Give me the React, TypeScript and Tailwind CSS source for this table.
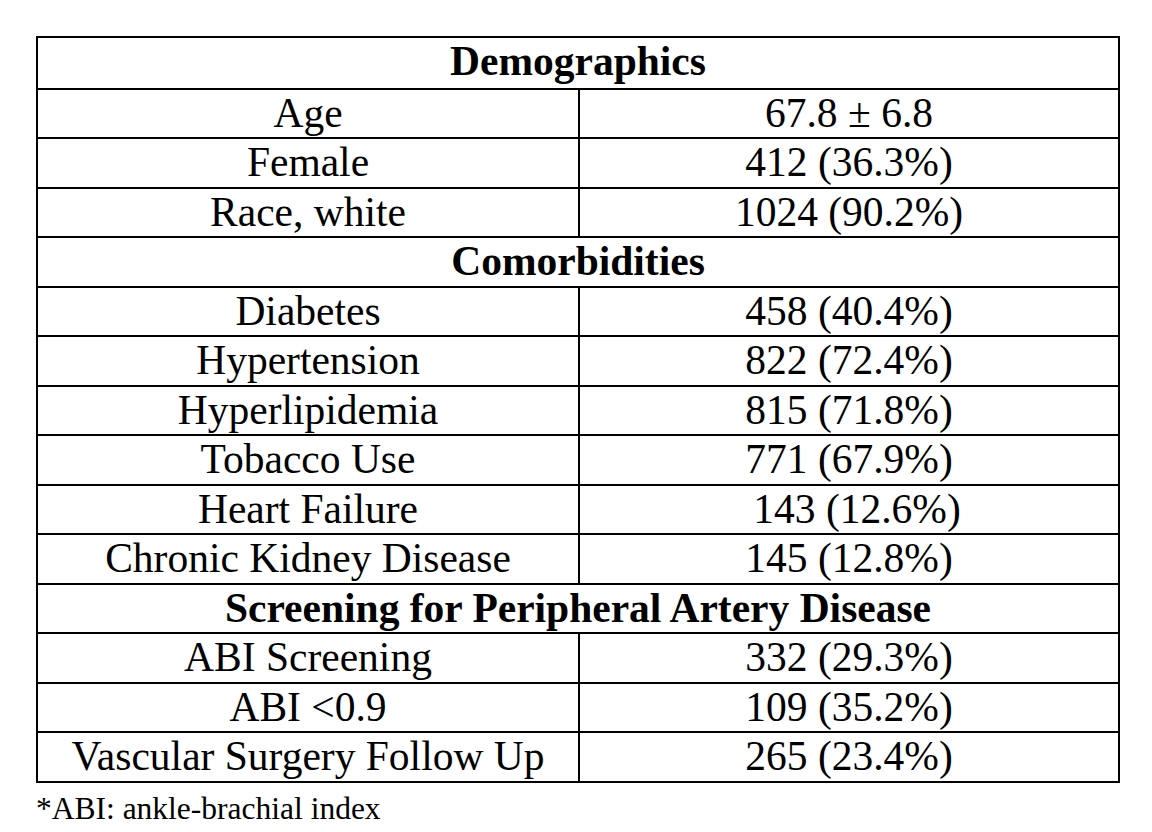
type Row =
  | { kind: 'head'; label: string }
  | { kind: 'data'; label: string; value: string; shift?: boolean };

const rows: Row[] = [
  { kind: 'head', label: 'Demographics' },
  { kind: 'data', label: 'Age', value: '67.8 ± 6.8' },
  { kind: 'data', label: 'Female', value: '412 (36.3%)' },
  { kind: 'data', label: 'Race, white', value: '1024 (90.2%)' },
  { kind: 'head', label: 'Comorbidities' },
  { kind: 'data', label: 'Diabetes', value: '458 (40.4%)' },
  { kind: 'data', label: 'Hypertension', value: '822 (72.4%)' },
  { kind: 'data', label: 'Hyperlipidemia', value: '815 (71.8%)' },
  { kind: 'data', label: 'Tobacco Use', value: '771 (67.9%)' },
  { kind: 'data', label: 'Heart Failure', value: '143 (12.6%)', shift: true },
  { kind: 'data', label: 'Chronic Kidney Disease', value: '145 (12.8%)' },
  { kind: 'head', label: 'Screening for Peripheral Artery Disease' },
  { kind: 'data', label: 'ABI Screening', value: '332 (29.3%)' },
  { kind: 'data', label: 'ABI <0.9', value: '109 (35.2%)' },
  { kind: 'data', label: 'Vascular Surgery Follow Up', value: '265 (23.4%)' },
];

export default function App() {
  return (
    <div className="min-h-screen bg-white text-black font-['Liberation_Serif','Times_New_Roman',serif]">
      <div className="ml-[36px] pt-[36px] w-[1084px]">
        <div className="border-2 border-black">
          {rows.map((row, i) => (
            <div
              key={i}
              className={`flex h-[49.5px] text-[41.5px] leading-[47.5px] ${i > 0 ? 'border-t-2 border-black' : ''}`}
            >
              {row.kind === 'head' ? (
                <div className="flex-1 text-center font-bold whitespace-nowrap">{row.label}</div>
              ) : (
                <>
                  <div className="w-[542px] shrink-0 border-r-2 border-black text-center whitespace-nowrap">
                    {row.label}
                  </div>
                  <div className={`flex-1 text-center whitespace-nowrap ${row.shift ? 'pl-[16px]' : ''}`}>
                    {row.value}
                  </div>
                </>
              )}
            </div>
          ))}
        </div>
        <div className="mt-[2px] text-[31.5px]">*ABI: ankle-brachial index</div>
      </div>
    </div>
  );
}
